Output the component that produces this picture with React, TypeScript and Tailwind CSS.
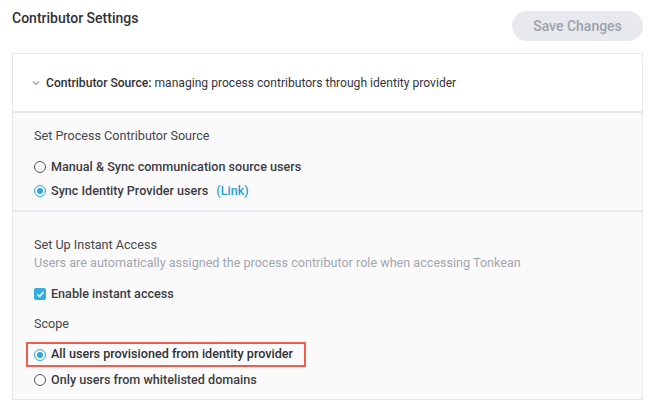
import React from 'react';

function Radio({ checked }: { checked?: boolean }) {
    return checked ? (
        <span className="w-[12px] h-[12px] rounded-full border border-[#2ea6dc] flex items-center justify-center shrink-0">
            <span className="w-[6px] h-[6px] rounded-full bg-[#2ea6dc]" />
        </span>
    ) : (
        <span className="w-[12px] h-[12px] rounded-full border border-[#55585e] shrink-0" />
    );
}

function Checkbox() {
    return (
        <span className="w-[12px] h-[12px] rounded-[2px] bg-[#33aedd] flex items-center justify-center shrink-0">
            <svg width="9" height="9" viewBox="0 0 10 10" fill="none">
                <path d="M2 5.2l2 2 4-4.4" stroke="white" strokeWidth="1.6" strokeLinecap="round" strokeLinejoin="round" />
            </svg>
        </span>
    );
}

export default function App() {
    return (
        <div className="min-h-screen bg-white pt-[9px] pl-3 pr-2 font-['Roboto',sans-serif] text-[12.6px] text-[#34363c]">
            {/* Top bar */}
            <div className="flex justify-between items-start">
                <h1 className="text-[14px] leading-[18px] font-medium text-[#2f3136]">Contributor Settings</h1>
                <button className="mt-[2px] h-[30px] w-[131px] rounded-full bg-[#e8e9ee] text-[14px] font-medium text-[#9ea2aa]">
                    Save Changes
                </button>
            </div>

            {/* Card */}
            <div className="mt-3 border border-[#e7e8ed]">
                <div className="h-[59px] flex items-center pl-[19px] border-b-2 border-[#e7e8ed] bg-white text-[12.1px]">
                    <svg width="8" height="6" viewBox="0 0 8 6" className="mr-[6px]">
                        <path d="M1 1.5l3 3 3-3" stroke="#9aa0a8" strokeWidth="1.2" fill="none" />
                    </svg>
                    <span className="leading-[18px]">
                        <span className="font-medium text-[#2f3136]">Contributor Source:</span>{' '}
                        managing process contributors through identity provider
                    </span>
                </div>

                <div className="bg-[#fafafa] px-[21px] pt-[14px] pb-[10px] border-b-2 border-[#e7e8ed]">
                    <div className="leading-[18px] text-[#45474d]">Set Process Contributor Source</div>
                    <div className="mt-[13px] flex items-center gap-[5px] h-[18px] font-medium text-[#3b3d43]">
                        <Radio />
                        <span>Manual &amp; Sync communication source users</span>
                    </div>
                    <div className="mt-[6px] flex items-center gap-[5px] h-[18px] font-medium text-[#3b3d43]">
                        <Radio checked />
                        <span>Sync Identity Provider users</span>
                        <span className="ml-[3px] text-[#2a9fc9]">(Link)</span>
                    </div>
                </div>

                <div className="bg-[#fafafa] px-[21px] pt-[24px] pb-[10px]">
                    <div className="leading-[18px] text-[#45474d]">Set Up Instant Access</div>
                    <div className="leading-[18px] text-[#a3a7ae]">
                        Users are automatically assigned the process contributor role when accessing Tonkean
                    </div>
                    <div className="mt-[13px] flex items-center gap-[5px] h-[18px] font-medium text-[#3b3d43]">
                        <Checkbox />
                        <span>Enable instant access</span>
                    </div>
                    <div className="mt-[12px] leading-[18px] text-[#45474d]">Scope</div>
                    <div className="mt-[9px] -ml-[8px] w-[280px] h-[25px] border-2 border-[#f25c4c] pl-[6px] flex items-center gap-[5px] font-medium text-[#2f3136]">
                        <Radio checked />
                        <span>All users provisioned from identity provider</span>
                    </div>
                    <div className="mt-[4px] flex items-center gap-[5px] h-[18px] font-medium text-[#3b3d43]">
                        <Radio />
                        <span>Only users from whitelisted domains</span>
                    </div>
                </div>
            </div>
        </div>
    );
}
